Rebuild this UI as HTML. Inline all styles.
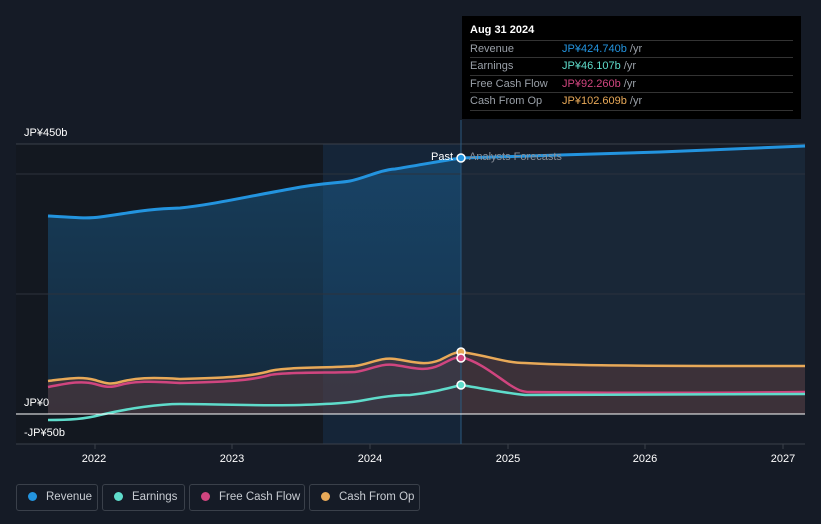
<!DOCTYPE html>
<html><head><meta charset="utf-8"><style>
html,body{margin:0;padding:0;background:#151b26;width:821px;height:524px;overflow:hidden;font-family:"Liberation Sans",sans-serif}
.tt{position:absolute;left:462px;top:16px;width:339px;height:103px;background:#000;color:#fff;font-size:11px}
.tt .h{position:absolute;left:8px;top:8px;font-weight:bold;font-size:11px}
.tt .r{position:absolute;left:8px;width:323px;height:17px;border-top:1px solid #333;color:#9aa0a8;line-height:17px}
.tt .r b{font-weight:normal;position:absolute;left:92px}
.tt .r i{font-style:normal;color:#9aa0a8}
.leg{position:absolute;top:484px;height:27px;border:1px solid #3a404a;border-radius:3px;color:#c8ccd2;font-size:11.5px;line-height:25px;box-sizing:border-box;white-space:nowrap;overflow:hidden}
.leg span{display:inline-block;width:9px;height:9px;border-radius:50%;margin:0 9px 0 11px;vertical-align:-1px}
</style></head><body>
<svg width="821" height="524" style="position:absolute;left:0;top:0">
<rect x="16" y="144" width="307" height="300" fill="#131820"/>
<rect x="323" y="144" width="138" height="300" fill="#152538"/>
<defs><linearGradient id="g" x1="0" y1="0" x2="0" y2="1"><stop offset="0" stop-color="#1a5b8a" stop-opacity="0.55"/><stop offset="1" stop-color="#1a5b8a" stop-opacity="0.25"/></linearGradient></defs>
<path d="M48,216 C70,217 85,219 100,217 C130,213 145,209 180,208 C210,205 240,198 290,189 C320,183 340,183 350,181 C365,178 380,170 395,169 C420,165 440,161 461,158 L461,414 L48,414Z" fill="url(#g)"/>
<path d="M461,158 L560,155 L660,152 L805,146 L805,414 L461,414Z" fill="#1a2a3c" opacity="0.8"/>
<path d="M48,381 C65,379 80,376 95,380 C105,383 110,385 120,382 C135,378 150,377 180,379 C220,378 250,377 270,371 C285,367 330,368 355,366 C370,364 380,357 395,359 C415,362 425,366 440,360 C450,355 455,352 461,352 C490,356 505,363 525,363 C560,365 600,366 805,366 L805,414 L48,414Z" fill="#5a3a3c" opacity="0.55"/>
<line x1="16" y1="144" x2="805" y2="144" stroke="#3a404a"/>
<line x1="16" y1="174" x2="805" y2="174" stroke="#2c323c"/>
<line x1="16" y1="294" x2="805" y2="294" stroke="#2c323c"/>
<line x1="16" y1="444" x2="805" y2="444" stroke="#3a404a"/>
<line x1="461" y1="120" x2="461" y2="444" stroke="#2a5a80"/>
<path d="M48,216 C70,217 85,219 100,217 C130,213 145,209 180,208 C210,205 240,198 290,189 C320,183 340,183 350,181 C365,178 380,170 395,169 C420,165 440,161 461,158 L560,155 L660,152 L805,146" fill="none" stroke="#2394df" stroke-width="3"/>
<path d="M48,381 C65,379 80,376 95,380 C105,383 110,385 120,382 C135,378 150,377 180,379 C220,378 250,377 270,371 C285,367 330,368 355,366 C370,364 380,357 395,359 C415,362 425,366 440,360 C450,355 455,352 461,352 C490,356 505,363 525,363 C560,365 600,366 805,366" fill="none" stroke="#e8a958" stroke-width="2.5"/>
<path d="M48,387 C65,384 80,380 95,384 C105,387 110,388 120,385 C135,381 150,381 180,383 C220,382 250,381 270,375 C285,372 330,373 355,372 C370,370 380,363 395,365 C415,368 425,372 440,365 C450,360 455,357 461,357 C480,362 495,375 510,385 C518,390 522,392 530,392 C600,393 700,393 805,392" fill="none" stroke="#d0457f" stroke-width="2.5"/>
<path d="M48,420 C70,420 85,419 100,415 C130,408 160,404 180,404 C220,404 250,406 300,405 C330,404 350,403 365,400 C380,397 395,395 410,395 C430,393 445,389 461,385 C480,388 505,393 525,395 C600,395 700,394 805,394" fill="none" stroke="#5fdccb" stroke-width="2.5"/>
<line x1="16" y1="414" x2="805" y2="414" stroke="#fff" stroke-width="1"/>
<circle cx="461" cy="158" r="4" fill="#2394df" stroke="#fff" stroke-width="1.5"/>
<circle cx="461" cy="352" r="4" fill="#e8a958" stroke="#fff" stroke-width="1.5"/>
<circle cx="461" cy="358" r="4" fill="#d0457f" stroke="#fff" stroke-width="1.5"/>
<circle cx="461" cy="385" r="4" fill="#5fdccb" stroke="#fff" stroke-width="1.5"/>
<g font-family="Liberation Sans" font-size="11" fill="#fff">
<text x="24" y="136">JP¥450b</text>
<text x="24" y="406">JP¥0</text>
<text x="24" y="436">-JP¥50b</text>
<text x="453" y="160" text-anchor="end">Past</text>
<text x="469" y="160" fill="#8a9099">Analysts Forecasts</text>
<g text-anchor="middle"><text x="94" y="462">2022</text><text x="232" y="462">2023</text><text x="370" y="462">2024</text><text x="508" y="462">2025</text><text x="645" y="462">2026</text><text x="783" y="462">2027</text></g>
</g>
<g stroke="#3a404a"><line x1="95" y1="444" x2="95" y2="449"/><line x1="232" y1="444" x2="232" y2="449"/><line x1="370" y1="444" x2="370" y2="449"/><line x1="508" y1="444" x2="508" y2="449"/><line x1="645" y1="444" x2="645" y2="449"/><line x1="783" y1="444" x2="783" y2="449"/></g>
</svg>
<div class="tt"><div class="h">Aug 31 2024</div>
<div class="r" style="top:24px">Revenue<b style="color:#2394df">JP¥424.740b <i>/yr</i></b></div>
<div class="r" style="top:41px">Earnings<b style="color:#5fdccb">JP¥46.107b <i>/yr</i></b></div>
<div class="r" style="top:59px">Free Cash Flow<b style="color:#d0457f">JP¥92.260b <i>/yr</i></b></div>
<div class="r" style="top:76px;border-bottom:1px solid #333">Cash From Op<b style="color:#e8a958">JP¥102.609b <i>/yr</i></b></div>
</div>
<div class="leg" style="left:16px;width:82px"><span style="background:#2394df"></span>Revenue</div>
<div class="leg" style="left:102px;width:83px"><span style="background:#5fdccb"></span>Earnings</div>
<div class="leg" style="left:189px;width:116px"><span style="background:#d0457f"></span>Free Cash Flow</div>
<div class="leg" style="left:309px;width:111px"><span style="background:#e8a958"></span>Cash From Op</div>
</body></html>
